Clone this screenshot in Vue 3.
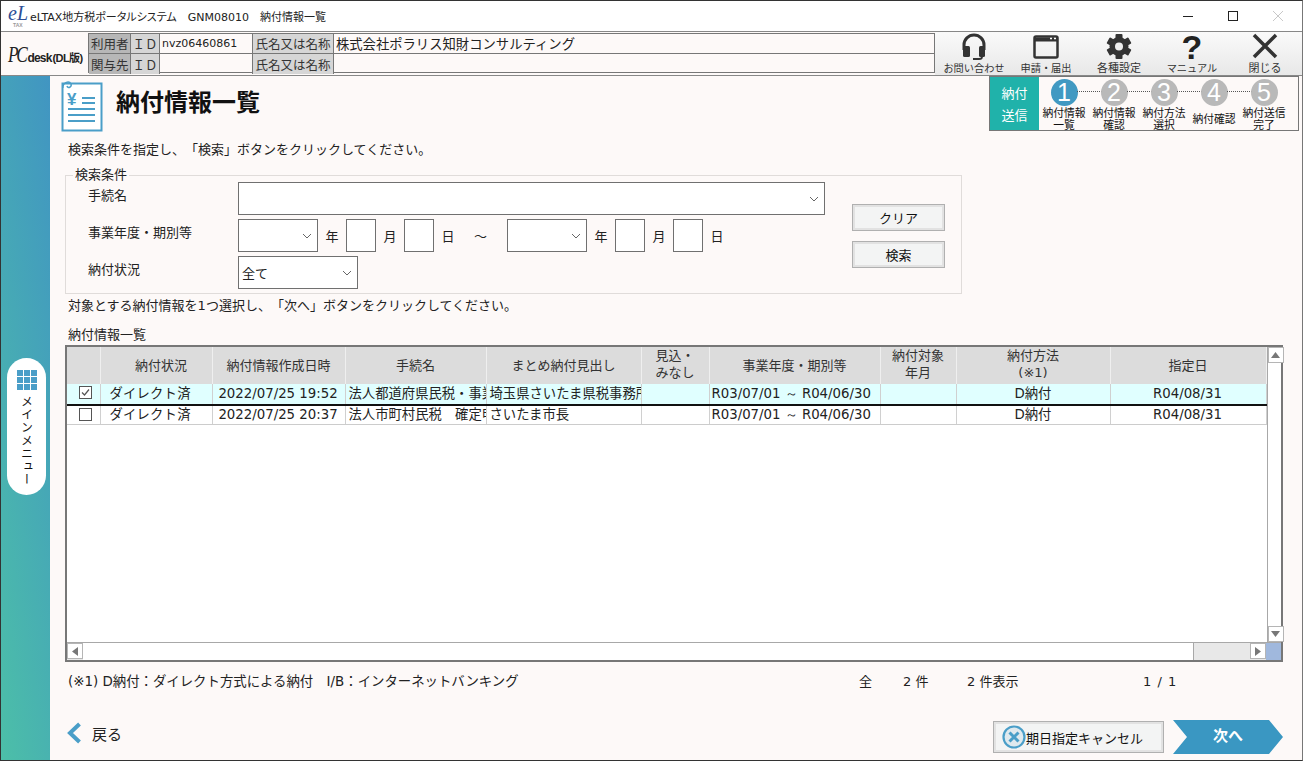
<template>
  <div class="window">
    <div class="titlebar">
      <div class="app-logo"><span class="el">eL</span><span class="tax">TAX</span></div>
      <span class="title-text">eLTAX地方税ポータルシステム　GNM08010　納付情報一覧</span>
      <div class="win-buttons">
        <svg width="12" height="12" viewBox="0 0 12 12"><path d="M1 6.5h10" stroke="#222" /></svg>
        <svg width="12" height="12" viewBox="0 0 12 12"><rect x="1.5" y="1.5" width="9" height="9" fill="none" stroke="#222" /></svg>
        <svg width="12" height="12" viewBox="0 0 12 12"><path d="M1 1l10 10M11 1L1 11" stroke="#c8c8c8" /></svg>
      </div>
    </div>

    <div class="toolbar">
      <div class="pc-logo"><span class="pc">PC</span><span class="desk">desk</span><span class="dl">(DL版)</span></div>
      <div class="user-table">
        <div class="cell head dark">利用者</div>
        <div class="cell head center">ＩＤ</div>
        <div class="cell value num">nvz06460861</div>
        <div class="cell head center">氏名又は名称</div>
        <div class="cell value">株式会社ポラリス知財コンサルティング</div>
        <div class="cell head dark">関与先</div>
        <div class="cell head center">ＩＤ</div>
        <div class="cell value"></div>
        <div class="cell head center">氏名又は名称</div>
        <div class="cell value"></div>
      </div>
      <div class="tools">
        <div class="tool small">
          <svg width="30" height="27" viewBox="0 0 30 27">
            <path d="M5 17V12a10 10 0 0 1 20 0v5" fill="none" stroke="#333" stroke-width="3" />
            <rect x="4" y="13" width="7" height="11" rx="1.5" fill="#333" />
            <rect x="20" y="13" width="6" height="11" rx="1.5" fill="#333" />
            <path d="M23 24c0 1.5-1 2-3 2h-6" fill="none" stroke="#333" stroke-width="1.8" />
          </svg>
          <span>お問い合わせ</span>
        </div>
        <div class="tool small">
          <svg width="30" height="27" viewBox="0 0 30 27">
            <rect x="3.5" y="3.5" width="23" height="21" rx="1.5" fill="none" stroke="#333" stroke-width="2.5" />
            <path d="M3 6.5h24" stroke="#333" stroke-width="4" />
            <path d="M19 5.5h2M23 5.5h2" stroke="#fff" stroke-width="1.5" />
          </svg>
          <span>申請・届出</span>
        </div>
        <div class="tool">
          <svg width="30" height="27" viewBox="0 0 30 27">
            <g fill="#333">
              <rect x="11.5" y="1" width="7" height="25" rx="1" />
              <rect x="11.5" y="1" width="7" height="25" rx="1" transform="rotate(60 15 13.5)" />
              <rect x="11.5" y="1" width="7" height="25" rx="1" transform="rotate(120 15 13.5)" />
              <circle cx="15" cy="13.5" r="9.5" />
            </g>
            <circle cx="15" cy="13.5" r="4" fill="#eee" />
          </svg>
          <span>各種設定</span>
        </div>
        <div class="tool small">
          <div class="question">?</div>
          <span>マニュアル</span>
        </div>
        <div class="tool">
          <svg width="30" height="27" viewBox="0 0 30 27"><path d="M4 2l22 22M26 2L4 24" stroke="#333" stroke-width="3.5" /></svg>
          <span>閉じる</span>
        </div>
      </div>
    </div>

    <div class="body">
      <aside class="sidebar">
        <div class="menu-pill">
          <div class="menu-grid"><i v-for="n in 9" :key="n"></i></div>
          <span class="menu-text">メインメニュー</span>
        </div>
      </aside>

      <main class="content">
        <div class="page-head">
          <svg class="page-icon" width="42" height="52" viewBox="0 -2 42 52">
            <rect x="1.5" y="1.5" width="39" height="47" fill="#fff" stroke="#4a9ec8" stroke-width="2" />
            <path d="M2 6c-1-5 6-8 8-4 1 3-3 5-4 2" fill="none" stroke="#4a9ec8" stroke-width="1.5" />
            <text x="6" y="23" class="yen">¥</text>
            <path d="M21 16h13M21 21h13M7 27h27M7 33h27M7 39h27" stroke="#4a9ec8" stroke-width="2" />
          </svg>
          <h1>納付情報一覧</h1>
          <div class="stepper">
            <div class="step-kind"><span>納付</span><span>送信</span></div>
            <div v-for="(s, i) in steps" :key="s.no" class="step" :class="{ active: i === 0, last: i === steps.length - 1 }">
              <div class="circle">{{ s.no }}</div>
              <div class="step-label">
                <span v-for="l in s.lines" :key="l">{{ l }}</span>
              </div>
            </div>
          </div>
        </div>

        <p class="guide first">検索条件を指定し、「検索」ボタンをクリックしてください。</p>

        <fieldset class="search">
          <legend>検索条件</legend>
          <div class="search-rows">
            <div class="row">
              <label>手続名</label>
              <div class="select w587"><svg width="10" height="6" viewBox="0 0 10 6"><path d="M1 1l4 4 4-4" fill="none" stroke="#666" /></svg></div>
            </div>
            <div class="row">
              <label>事業年度・期別等</label>
              <div class="select w80"><svg width="10" height="6" viewBox="0 0 10 6"><path d="M1 1l4 4 4-4" fill="none" stroke="#666" /></svg></div>
              <span class="unit">年</span><div class="box"></div>
              <span class="unit">月</span><div class="box"></div>
              <span class="unit">日</span>
              <span class="tilde">～</span>
              <div class="select w80"><svg width="10" height="6" viewBox="0 0 10 6"><path d="M1 1l4 4 4-4" fill="none" stroke="#666" /></svg></div>
              <span class="unit">年</span><div class="box"></div>
              <span class="unit">月</span><div class="box"></div>
              <span class="unit">日</span>
            </div>
            <div class="row">
              <label>納付状況</label>
              <div class="select w120"><span>全て</span><svg width="10" height="6" viewBox="0 0 10 6"><path d="M1 1l4 4 4-4" fill="none" stroke="#666" /></svg></div>
            </div>
          </div>
          <div class="search-buttons">
            <button class="btn">クリア</button>
            <button class="btn">検索</button>
          </div>
        </fieldset>

        <p class="guide second">対象とする納付情報を1つ選択し、「次へ」ボタンをクリックしてください。</p>
        <p class="list-title">納付情報一覧</p>

        <div class="grid-wrap">
          <div class="grid-main">
            <table class="grid">
              <colgroup>
                <col v-for="w in colWidths" :key="w.id" :style="{ width: w.px + 'px' }" />
              </colgroup>
              <thead>
                <tr>
                  <th></th>
                  <th class="th-status">納付状況</th>
                  <th>納付情報作成日時</th>
                  <th>手続名</th>
                  <th>まとめ納付見出し</th>
                  <th class="tall">見込・<br />みなし</th>
                  <th>事業年度・期別等</th>
                  <th class="tall">納付対象<br />年月</th>
                  <th class="tall">納付方法<br />(※1)</th>
                  <th>指定日</th>
                </tr>
              </thead>
              <tbody>
                <tr v-for="r in rows" :key="r.date" :class="{ selected: r.checked }">
                  <td class="chk">
                    <svg width="13" height="13" viewBox="0 0 13 13">
                      <rect x="0.5" y="0.5" width="12" height="12" fill="#fff" stroke="#555" />
                      <path v-if="r.checked" d="M3 6.5l2.5 2.5L10 3.5" fill="none" stroke="#555" stroke-width="1.2" />
                    </svg>
                  </td>
                  <td class="status">ダイレクト済</td>
                  <td class="c num">{{ r.date }}</td>
                  <td class="clip">{{ r.proc }}</td>
                  <td class="clip">{{ r.title }}</td>
                  <td></td>
                  <td class="num">R03/07/01 ～ R04/06/30</td>
                  <td></td>
                  <td class="c">D納付</td>
                  <td class="c num">R04/08/31</td>
                </tr>
              </tbody>
            </table>
            <div class="vbar">
              <div class="sb-btn"><svg width="9" height="6" viewBox="0 0 9 6"><path d="M4.5 0L9 6H0z" fill="#777" /></svg></div>
              <div class="sb-btn"><svg width="9" height="6" viewBox="0 0 9 6"><path d="M0 0h9L4.5 6z" fill="#777" /></svg></div>
            </div>
          </div>
          <div class="hbar">
            <div class="sb-btn"><svg width="6" height="9" viewBox="0 0 6 9"><path d="M6 0v9L0 4.5z" fill="#777" /></svg></div>
            <div class="thumb"></div>
            <div class="sb-btn"><svg width="6" height="9" viewBox="0 0 6 9"><path d="M0 0v9l6-4.5z" fill="#777" /></svg></div>
            <div class="corner"></div>
          </div>
        </div>

        <div class="note-row">
          <span class="note">(※1) D納付：ダイレクト方式による納付　I/B：インターネットバンキング</span>
          <span class="cnt cnt-all">全</span>
          <span class="cnt cnt-two">2 件</span>
          <span class="cnt cnt-shown">2 件表示</span>
          <span class="cnt cnt-page">1 / 1</span>
        </div>

        <div class="footer">
          <div class="back">
            <svg width="16" height="22" viewBox="0 0 16 22"><path d="M13.5 2L4 11l9.5 9" fill="none" stroke="#4a9ec8" stroke-width="4" /></svg>
            <span>戻る</span>
          </div>
          <button class="btn cancel">
            <svg width="24" height="24" viewBox="0 0 24 24">
              <circle cx="12" cy="12" r="10.5" fill="#dfe9ee" stroke="#4a9ec8" stroke-width="2.2" />
              <path d="M7.5 7.5l9 9M16.5 7.5l-9 9" stroke="#4a9ec8" stroke-width="3" />
            </svg>
            <span>期日指定キャンセル</span>
          </button>
          <div class="next">次へ</div>
        </div>
      </main>
    </div>
  </div>
</template>

<script setup>
const steps = [
  { no: 1, lines: ['納付情報', '一覧'] },
  { no: 2, lines: ['納付情報', '確認'] },
  { no: 3, lines: ['納付方法', '選択'] },
  { no: 4, lines: ['納付確認'] },
  { no: 5, lines: ['納付送信', '完了'] }
]

const colWidths = [
  { id: 'chk', px: 33 },
  { id: 'status', px: 112 },
  { id: 'date', px: 133 },
  { id: 'proc', px: 141 },
  { id: 'title', px: 155 },
  { id: 'est', px: 68 },
  { id: 'period', px: 171 },
  { id: 'month', px: 76 },
  { id: 'method', px: 154 },
  { id: 'due', px: 156 }
]

const rows = [
  { checked: true, date: '2022/07/25 19:52', proc: '法人都道府県民税・事業税', title: '埼玉県さいたま県税事務所' },
  { checked: false, date: '2022/07/25 20:37', proc: '法人市町村民税　確定申告', title: 'さいたま市長' }
]
</script>

<style>
html, body {
  margin: 0;
  background: #fff;
}
</style>

<style scoped>
.window {
  width: 1303px;
  height: 761px;
  box-sizing: border-box;
  border: 1px solid #333;
  border-right-color: #777;
  display: flex;
  flex-direction: column;
  overflow: hidden;
  font-family: "DejaVu Sans", "Noto Sans CJK JP", sans-serif;
  font-size: 13px;
  color: #222;
  background: #fff;
  text-spacing-trim: space-all;
}

.num {
  font-family: "DejaVu Sans", sans-serif;
}

/* title bar */
.titlebar {
  height: 30px;
  display: flex;
  align-items: center;
  background: #fff;
}
.app-logo {
  position: relative;
  width: 22px;
  height: 24px;
  margin-left: 7px;
}
.el {
  font-family: "Liberation Serif", serif;
  font-style: italic;
  font-size: 20px;
  line-height: 18px;
  color: #2c4d96;
}
.tax {
  position: absolute;
  left: 5px;
  top: 18px;
  font-family: "Liberation Sans", sans-serif;
  font-size: 5px;
  line-height: 6px;
  font-weight: 700;
  color: #999;
}
.title-text {
  font-size: 11px;
  font-feature-settings: "palt";
}
.win-buttons {
  margin-left: auto;
  display: flex;
  gap: 33px;
  padding-right: 18px;
}

/* toolbar */
.toolbar {
  height: 43px;
  display: flex;
  border-top: 1px solid #888;
  border-bottom: 1px solid #888;
  box-sizing: content-box;
  background: #fdf9f8;
}
.pc-logo {
  width: 87px;
  display: flex;
  align-items: baseline;
  padding: 9px 0 0 7px;
  box-sizing: border-box;
  color: #222;
  white-space: nowrap;
}
.pc {
  display: inline-block;
  font-family: "Liberation Serif", serif;
  font-style: italic;
  font-size: 23px;
  line-height: 28px;
  letter-spacing: -3px;
  transform: scaleX(0.75);
  transform-origin: left;
  margin-right: -4px;
}
.desk {
  font-family: "Liberation Sans", sans-serif;
  font-size: 12px;
  font-weight: 700;
  letter-spacing: -0.8px;
}
.dl {
  font-family: "Liberation Sans", "Noto Sans CJK JP", sans-serif;
  font-size: 11px;
  font-weight: 700;
  letter-spacing: -0.6px;
  margin-left: 1px;
}
.user-table {
  width: 848px;
  height: 40px;
  margin-top: 1px;
  display: grid;
  grid-template-columns: 42px 29px 93px 81px 1fr;
  grid-template-rows: 20px 20px;
  box-sizing: border-box;
  border: 1px solid #777;
}
.cell {
  display: flex;
  align-items: center;
  padding-left: 2px;
  border-right: 1px solid #777;
  border-bottom: 1px solid #777;
  font-size: 13.33px;
  white-space: nowrap;
  overflow: hidden;
}
.cell.num {
  font-size: 11px;
}
.cell:nth-child(5n) {
  border-right: none;
}
.cell:nth-child(n + 6) {
  border-bottom: none;
}
.cell.head {
  background: #d6d6d6;
  color: #333;
  font-size: 12.5px;
}
.cell.head.dark {
  background: #b7b7b7;
}
.cell.center {
  justify-content: center;
  padding-left: 0;
}
.tools {
  flex: 1;
  display: flex;
  padding-left: 3px;
  background: linear-gradient(#fafafa, #e8e8e8);
}
.tool {
  width: 72px;
  height: 43px;
  display: flex;
  flex-direction: column;
  align-items: center;
  justify-content: flex-end;
  font-size: 11px;
  line-height: 13px;
  white-space: nowrap;
  color: #333;
}
.tool.small {
  font-size: 10.2px;
}
.tool:nth-child(3),
.tool:nth-child(5) {
  width: 74px;
}
.tool svg {
  display: block;
  margin-bottom: 2px;
}
.question {
  height: 29px;
  font-family: "Liberation Sans", sans-serif;
  font-weight: 700;
  font-size: 34px;
  line-height: 28px;
  color: #222;
}

/* body */
.body {
  flex: 1;
  min-height: 0;
  display: flex;
}
.sidebar {
  position: relative;
  width: 49px;
  flex-shrink: 0;
  background: linear-gradient(80deg, #4cbfa8, #4195c2);
}
.menu-pill {
  position: absolute;
  left: 6px;
  top: 282px;
  width: 39px;
  height: 137px;
  box-sizing: border-box;
  padding-top: 12px;
  border-radius: 20px;
  background: #fff;
  display: flex;
  flex-direction: column;
  align-items: center;
  gap: 5px;
}
.menu-grid {
  display: grid;
  grid-template-columns: repeat(3, 6px);
  grid-auto-rows: 6px;
  gap: 1px;
}
.menu-grid i {
  background: #4a9ec8;
}
.menu-text {
  writing-mode: vertical-rl;
  font-family: "Noto Sans CJK JP", sans-serif;
  font-size: 12px;
  line-height: 12px;
  letter-spacing: 1px;
  color: #111;
}
.content {
  flex: 1;
  min-width: 0;
  background: #fdf9f8;
  padding: 0 19px 0 15px;
  display: flex;
  flex-direction: column;
}

.page-head {
  height: 62px;
  display: flex;
  align-items: flex-start;
  position: relative;
}
.page-icon {
  margin: 4px 0 0 -4px;
  flex-shrink: 0;
}
.yen {
  font-family: "Liberation Sans", sans-serif;
  font-size: 17px;
  font-weight: 700;
  fill: #4a9ec8;
}
h1 {
  margin: 7px 0 0 13px;
  font-family: "Noto Sans CJK JP", sans-serif;
  font-size: 24px;
  line-height: 36px;
  font-weight: 700;
  color: #111;
}
.stepper {
  position: absolute;
  left: 924px;
  top: 0;
  width: 310px;
  height: 55px;
  box-sizing: border-box;
  border: 1px solid #777;
  background: #fdf9f8;
  display: flex;
}
.step-kind {
  width: 49px;
  background: #20b2aa;
  color: #fff;
  font-family: "Noto Sans CJK JP", sans-serif;
  font-size: 13px;
  display: flex;
  flex-direction: column;
  align-items: center;
  justify-content: center;
  gap: 4px;
  line-height: 18px;
}
.step {
  position: relative;
  width: 50px;
  display: flex;
  flex-direction: column;
  align-items: center;
  padding-top: 2px;
}
.step:not(.last)::after {
  content: "";
  position: absolute;
  left: 38px;
  width: 25px;
  top: 14px;
  border-top: 1px dotted #555;
}
.circle {
  width: 27px;
  height: 27px;
  flex-shrink: 0;
  border-radius: 50%;
  background: #b9b9b9;
  color: #fff;
  font-family: "Liberation Sans", sans-serif;
  font-size: 25px;
  line-height: 27px;
  text-align: center;
}
.step.active .circle {
  background: #4199c2;
}
.step-label {
  flex: 1;
  display: flex;
  flex-direction: column;
  align-items: center;
  justify-content: center;
  font-family: "Noto Sans CJK JP", sans-serif;
  font-size: 10.8px;
  line-height: 12px;
  white-space: nowrap;
  color: #111;
}
.step-label span {
  display: block;
  height: 12px;
}

p {
  margin: 0;
}
.guide {
  padding-left: 3px;
  line-height: 16px;
}
.guide.first {
  margin-top: 4px;
}
.guide.second {
  margin-top: 4px;
}
.list-title {
  margin-top: 13px;
  padding-left: 3px;
  line-height: 16px;
}

/* search form */
.search {
  margin: 17px 0 0 0;
  padding: 0;
  width: 897px;
  height: 119px;
  box-sizing: border-box;
  border: 1px solid #e0dcda;
  position: relative;
  display: flex;
}
legend {
  position: absolute;
  left: 7px;
  top: -9px;
  padding: 0 2px;
  background: #fdf9f8;
  line-height: 16px;
}
.search-rows {
  padding: 6px 0 0 22px;
  display: flex;
  flex-direction: column;
  gap: 4px;
}
.row {
  display: flex;
  align-items: flex-start;
  height: 33px;
}
.row label {
  width: 150px;
  padding-top: 6px;
  line-height: 16px;
  flex-shrink: 0;
}
.select {
  height: 33px;
  box-sizing: border-box;
  border: 1px solid #707070;
  background: #fff;
  display: flex;
  align-items: center;
  justify-content: space-between;
  padding: 0 5px 0 3px;
  flex-shrink: 0;
}
.select svg {
  margin-left: auto;
}
.w587 { width: 587px; }
.w80 { width: 80px; }
.w120 { width: 120px; }
.unit {
  width: 28px;
  flex-shrink: 0;
  text-align: center;
  line-height: 36px;
}
.box {
  width: 30px;
  height: 33px;
  box-sizing: border-box;
  border: 1px solid #707070;
  background: #fff;
  flex-shrink: 0;
}
.tilde {
  width: 45px;
  box-sizing: border-box;
  padding-right: 8px;
  text-align: center;
  line-height: 36px;
  flex-shrink: 0;
}
.search-buttons {
  position: absolute;
  left: 786px;
  top: 28px;
  display: flex;
  flex-direction: column;
  gap: 10px;
}
.btn {
  width: 93px;
  height: 27px;
  padding: 0;
  box-sizing: border-box;
  border: 1px solid #b0b0b0;
  outline: 2px solid #e2e2e2;
  outline-offset: -3px;
  background: #f3f4f4;
  font: inherit;
  color: #111;
}

/* grid */
.grid-wrap {
  margin: 2px 0 0 0;
  width: 1218px;
  height: 317px;
  box-sizing: border-box;
  border: 2px solid #777;
  background: #fff;
  display: flex;
  flex-direction: column;
}
.grid-main {
  flex: 1;
  min-height: 0;
  display: flex;
}
.grid {
  width: 1199px;
  align-self: flex-start;
  table-layout: fixed;
  border-collapse: collapse;
  flex-shrink: 0;
}
.grid th {
  height: 37px;
  padding: 0;
  box-sizing: border-box;
  background: #dcdcdc;
  border-right: 1px solid #efefef;
  font-weight: 400;
  line-height: 16px;
  color: #333;
}
.grid th.th-status {
  padding-left: 10px;
}
.grid th.tall {
  line-height: 17px;
  vertical-align: top;
}
.grid td {
  height: 19px;
  padding: 0 3px;
  box-sizing: border-box;
  border-right: 1px solid #d0d0d0;
  border-bottom: 1px solid #ccc;
  white-space: nowrap;
  overflow: hidden;
  font-size: 13.33px;
  line-height: 18px;
  color: #222;
}
.grid tr.selected td {
  height: 21px;
  background: #e0ffff;
  border-bottom: 2px solid #111;
}
.grid td.chk {
  text-align: center;
  line-height: 0;
  vertical-align: top;
  padding: 2px 0 0 4px;
}
.grid td.c {
  text-align: center;
}
.grid td.clip {
  text-overflow: clip;
}
.grid td.status {
  padding-left: 9px;
  letter-spacing: 0.2px;
}
.grid td.num {
  font-size: 13.3px;
  padding-left: 2px;
}
.vbar {
  flex: 1;
  border-left: 1px solid #a8a8a8;
  display: flex;
  flex-direction: column;
  justify-content: space-between;
}
.sb-btn {
  width: 16px;
  height: 16px;
  box-sizing: border-box;
  border: 1px solid #b5b5b5;
  background: #fff;
  display: flex;
  align-items: center;
  justify-content: center;
  flex-shrink: 0;
}
.hbar {
  height: 17px;
  display: flex;
  border-top: 1px solid #a8a8a8;
  background: #e8e8e8;
}
.thumb {
  width: 1110px;
  background: #fff;
  border-right: 1px solid #a8a8a8;
  margin-right: 56px;
  flex-shrink: 0;
}
.corner {
  flex: 1;
  background: #a0b8dd;
}

/* bottom */
.note-row {
  position: relative;
  height: 16px;
  margin-top: 12px;
  line-height: 16px;
}
.note {
  padding-left: 3px;
  white-space: nowrap;
  font-size: 13.4px;
}
.cnt {
  position: absolute;
  top: 0;
}
.cnt-all { left: 794px; }
.cnt-two { left: 838px; }
.cnt-shown { left: 902px; }
.cnt-page {
  left: 1078px;
  letter-spacing: 1px;
}
.footer {
  margin-top: 30px;
  display: flex;
  align-items: center;
  height: 34px;
}
.back {
  display: flex;
  align-items: center;
  gap: 10px;
  font-size: 15px;
  font-family: "Noto Sans CJK JP", sans-serif;
  margin: -8px 0 0 1px;
}
.btn.cancel {
  margin-left: auto;
  width: 171px;
  height: 32px;
  display: flex;
  align-items: center;
  padding-left: 8px;
  font-size: 13px;
  white-space: nowrap;
  color: #111;
}
.next {
  margin-left: 9px;
  width: 110px;
  height: 34px;
  background: #3a97c2;
  color: #fff;
  font-family: "Noto Sans CJK JP", sans-serif;
  font-weight: 700;
  font-size: 15px;
  line-height: 30px;
  text-align: center;
  clip-path: polygon(0 0, 96px 0, 100% 50%, 96px 100%, 0 100%, 14px 50%);
}
</style>
